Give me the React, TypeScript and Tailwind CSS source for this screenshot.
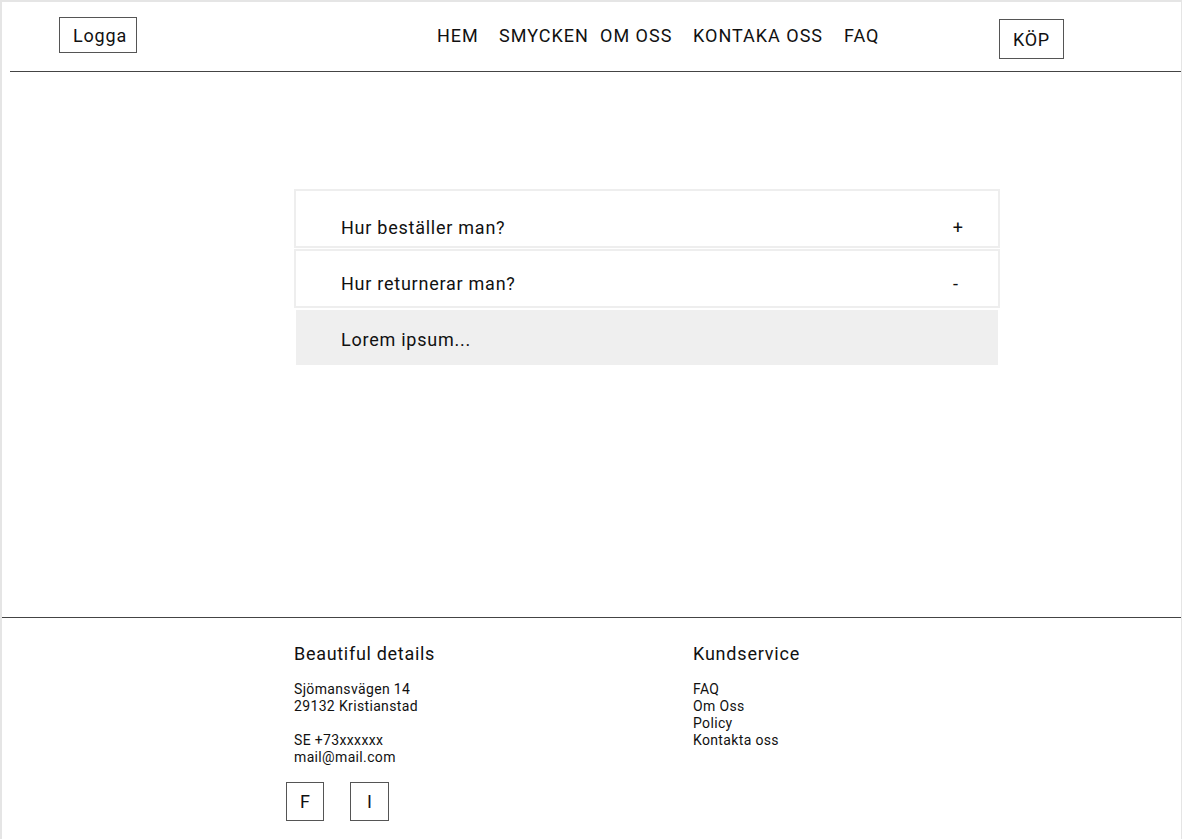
export default function App() {
  const nav = [
    { label: 'HEM', w: 'w-[62px]' },
    { label: 'SMYCKEN', w: 'w-[101px]' },
    { label: 'OM OSS', w: 'w-[93px]' },
    { label: 'KONTAKA OSS', w: 'w-[151px]' },
    { label: 'FAQ', w: '' },
  ];

  return (
    <div className="min-h-[839px] bg-white border-t-2 border-l-2 border-r border-[#e5e5e5] text-[#111] font-['Roboto',sans-serif]">
      {/* header */}
      <header className="flex h-[69px]">
        <div className="w-[435px] pl-[57px] pt-[15px]">
          <div className="w-[78px] h-[36px] border border-[#555] flex items-center justify-center pl-[4px] text-[18px] leading-[21px] tracking-[0.8px]">
            Logga
          </div>
        </div>
        <nav className="w-[562px] flex pt-[23px] text-[18px] leading-[21px] tracking-[1px]">
          {nav.map((n) => (
            <a key={n.label} className={n.w}>
              {n.label}
            </a>
          ))}
        </nav>
        <div className="pt-[17px]">
          <div className="w-[65px] h-[40px] border border-[#555] flex items-center justify-center text-[18px] leading-[21px] tracking-[0.7px]">
            KÖP
          </div>
        </div>
      </header>
      <div className="ml-[8px] h-px bg-[#444]" />

      {/* faq */}
      <main className="h-[545px] pt-[117px] pl-[292px]">
        <div className="w-[706px] text-[18px] leading-[21px] tracking-[0.75px]">
          <div className="h-[59px] border-2 border-[#eeeeee] flex justify-between pl-[45px] pr-[35px] pt-[26px]">
            <span>Hur beställer man?</span>
            <span className="tracking-normal">+</span>
          </div>
          <div className="mt-[1px] h-[59px] border-2 border-[#eeeeee] flex justify-between pl-[45px] pr-[40px] pt-[22px]">
            <span>Hur returnerar man?</span>
            <span className="tracking-normal">-</span>
          </div>
          <div className="mt-[2px] mx-[2px] h-[55px] bg-[#efefef] pl-[45px] pt-[19px]">
            Lorem ipsum...
          </div>
        </div>
      </main>
      <div className="h-px bg-[#444]" />

      {/* footer */}
      <footer className="flex pt-[25px] pl-[292px] pb-[17px]">
        <div className="w-[399px]">
          <h3 className="text-[18px] leading-[21px] tracking-[0.7px]">Beautiful details</h3>
          <div className="mt-[17px] text-[14px] leading-[17px] tracking-[0.35px]">
            <p>Sjömansvägen 14</p>
            <p>29132 Kristianstad</p>
            <p className="mt-[17px]">SE +73xxxxxx</p>
            <p>mail@mail.com</p>
          </div>
          <div className="mt-[16px] -ml-[8px] flex gap-[26px]">
            <div className="w-[38px] h-[39px] border border-[#555] flex items-center justify-center text-[18px]">
              F
            </div>
            <div className="w-[39px] h-[39px] border border-[#555] flex items-center justify-center text-[18px]">
              I
            </div>
          </div>
        </div>
        <div>
          <h3 className="text-[18px] leading-[21px] tracking-[0.8px]">Kundservice</h3>
          <ul className="mt-[17px] text-[14px] leading-[17px] tracking-[0.35px]">
            <li>FAQ</li>
            <li>Om Oss</li>
            <li>Policy</li>
            <li>Kontakta oss</li>
          </ul>
        </div>
      </footer>
    </div>
  );
}
